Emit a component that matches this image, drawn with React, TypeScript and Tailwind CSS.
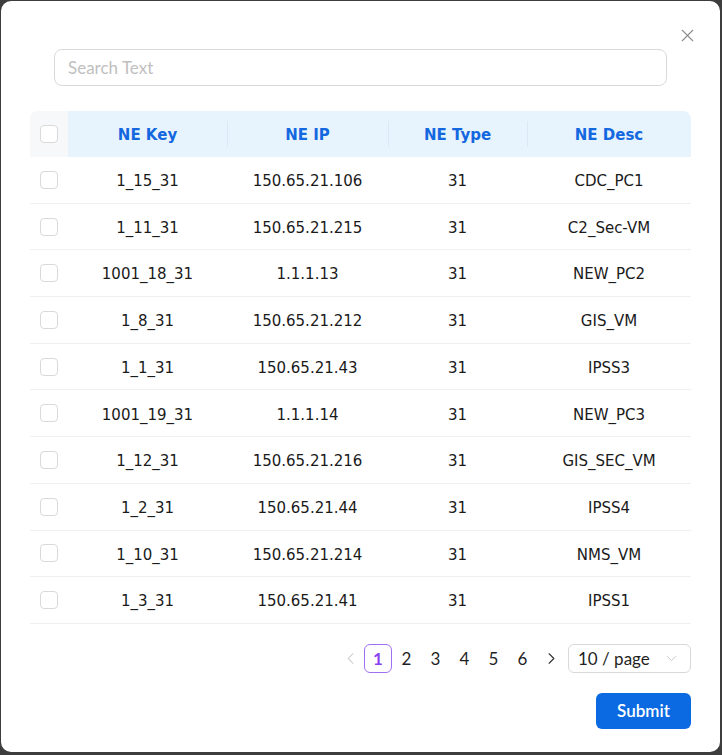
import React from 'react';
import { X, ChevronLeft, ChevronRight, ChevronDown } from 'lucide-react';

interface NeRow {
    key: string;
    ip: string;
    type: string;
    desc: string;
}

const rows: NeRow[] = [
    { key: '1_15_31', ip: '150.65.21.106', type: '31', desc: 'CDC_PC1' },
    { key: '1_11_31', ip: '150.65.21.215', type: '31', desc: 'C2_Sec-VM' },
    { key: '1001_18_31', ip: '1.1.1.13', type: '31', desc: 'NEW_PC2' },
    { key: '1_8_31', ip: '150.65.21.212', type: '31', desc: 'GIS_VM' },
    { key: '1_1_31', ip: '150.65.21.43', type: '31', desc: 'IPSS3' },
    { key: '1001_19_31', ip: '1.1.1.14', type: '31', desc: 'NEW_PC3' },
    { key: '1_12_31', ip: '150.65.21.216', type: '31', desc: 'GIS_SEC_VM' },
    { key: '1_2_31', ip: '150.65.21.44', type: '31', desc: 'IPSS4' },
    { key: '1_10_31', ip: '150.65.21.214', type: '31', desc: 'NMS_VM' },
    { key: '1_3_31', ip: '150.65.21.41', type: '31', desc: 'IPSS1' },
];

const uiFont = "font-['Lato','Noto_Sans',sans-serif]";
const tableFont = "font-['DejaVu_Sans','Verdana',sans-serif]";

const Checkbox: React.FC = () => (
    <span className="block w-[18px] h-[18px] rounded-[4px] border border-[#d9d9d9] bg-white" />
);

const HeaderCell: React.FC<{ label: string; width: string; divider?: boolean }> = ({ label, width, divider }) => (
    <div className={`${width} relative flex items-center justify-center pt-[2px]`}>
        {divider && <span className="absolute left-0 top-1/2 -translate-y-1/2 h-[26px] w-px bg-[#dbe9f5]" />}
        <span className="text-[15px] font-bold text-[#1368e0]">{label}</span>
    </div>
);

const App: React.FC = () => {
    return (
        <div className="w-[722px] h-[755px] bg-[#3d3d3d] pt-px pl-px pr-[2px] pb-[3px]">
            <div className={`relative h-full bg-white rounded-[10px] px-[29px] pt-[48px] ${uiFont}`}>
                <button className="absolute right-[22px] top-[24px] text-[#8c8c8c]">
                    <X size={21} strokeWidth={1.3} />
                </button>

                <div className="mx-[24px] h-[37px] rounded-[8px] border border-[#d9d9d9] flex items-center px-[13px]">
                    <span className="text-[17px] text-[#bfbfbf]">Search Text</span>
                </div>

                <div className={`mt-[25px] ${tableFont}`}>
                    <div className="flex h-[46px] rounded-t-[8px] overflow-hidden bg-[#e8f4fd]">
                        <div className="w-[38px] bg-[#f7f8f9] flex items-center justify-center">
                            <Checkbox />
                        </div>
                        <HeaderCell label="NE Key" width="w-[159px]" />
                        <HeaderCell label="NE IP" width="w-[161px]" divider />
                        <HeaderCell label="NE Type" width="w-[139px]" divider />
                        <HeaderCell label="NE Desc" width="flex-1" divider />
                    </div>
                    {rows.map(row => (
                        <div key={row.key} className="flex h-[46.7px] border-b border-[#f0f0f0] text-[15px] text-[#1a1a1a]">
                            <div className="w-[38px] flex items-center justify-center">
                                <Checkbox />
                            </div>
                            <div className="w-[159px] flex items-center justify-center pt-[3px]">{row.key}</div>
                            <div className="w-[161px] flex items-center justify-center pt-[3px]">{row.ip}</div>
                            <div className="w-[139px] flex items-center justify-center pt-[3px]">{row.type}</div>
                            <div className="flex-1 flex items-center justify-center pt-[3px]">{row.desc}</div>
                        </div>
                    ))}
                </div>

                <div className="mt-[20px] flex items-center justify-end h-[29px]">
                    <span className="w-[28px] flex items-center justify-center text-[#c4c4c4]">
                        <ChevronLeft size={19} strokeWidth={1.3} />
                    </span>
                    <span className="w-[28px] h-[29px] rounded-[6px] border border-[#a070f0] flex items-center justify-center text-[17px] font-bold text-[#8a3ff0]">1</span>
                    {['2', '3', '4', '5', '6'].map(n => (
                        <span key={n} className="w-[29px] flex items-center justify-center text-[17px] text-[#1f1f1f]">{n}</span>
                    ))}
                    <span className="w-[28px] flex items-center justify-center text-[#333]">
                        <ChevronRight size={19} strokeWidth={1.4} />
                    </span>
                    <div className="ml-[3px] w-[123px] h-[29px] rounded-[6px] border border-[#d9d9d9] flex items-center justify-between pl-[9px] pr-[10px]">
                        <span className="text-[17px] text-[#1f1f1f]">10 / page</span>
                        <ChevronDown size={17} strokeWidth={1.2} className="text-[#c4c4c4]" />
                    </div>
                </div>

                <div className="mt-[20px] flex justify-end">
                    <button className="w-[95px] h-[36px] rounded-[6px] bg-[#0b6ae2] text-white text-[17px] font-semibold">
                        Submit
                    </button>
                </div>
            </div>
        </div>
    );
};

export default App;
